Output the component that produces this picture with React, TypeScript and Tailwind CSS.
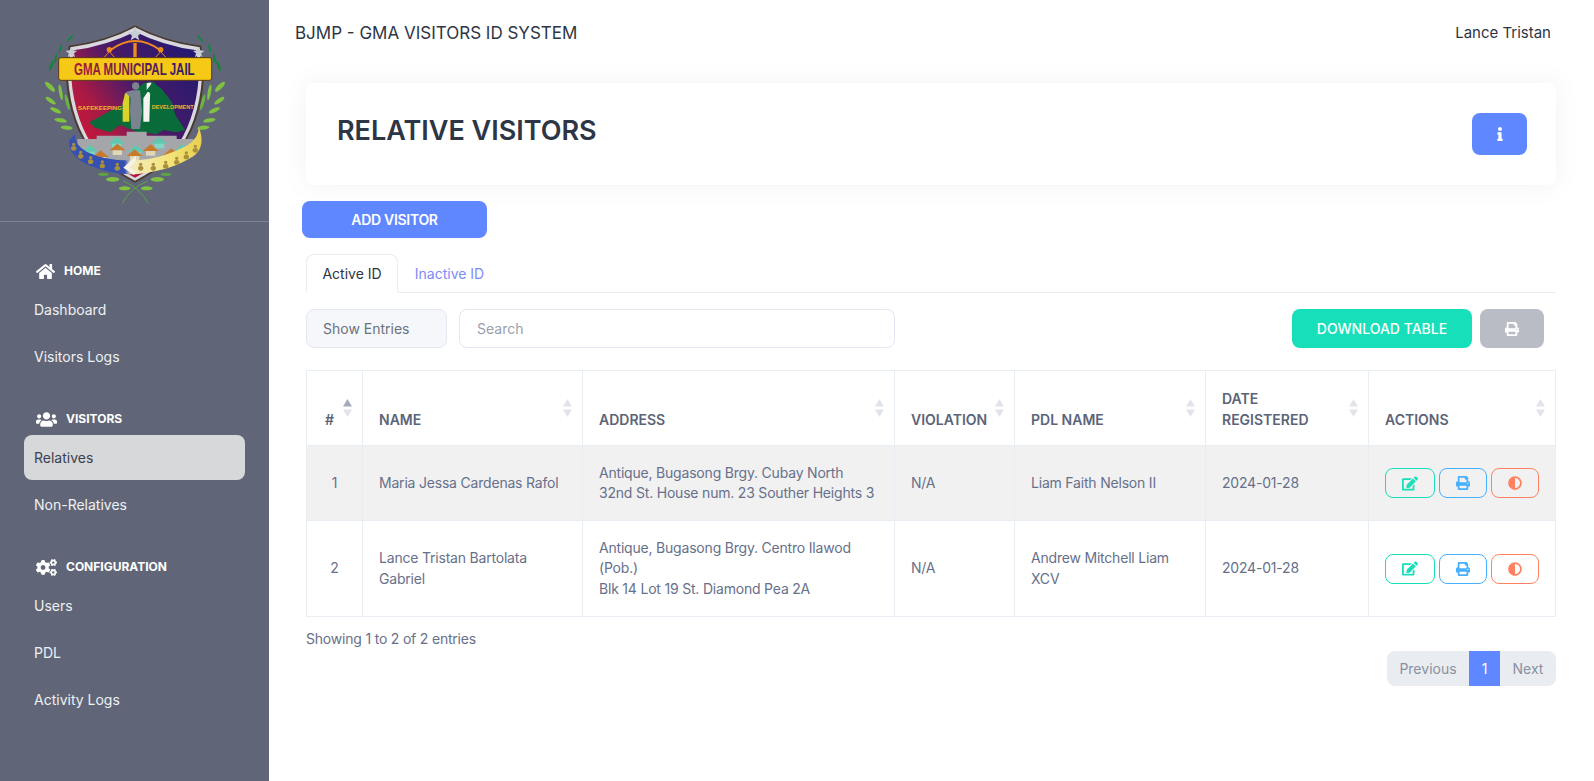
import { FaAdjust, FaCogs, FaEdit, FaHome, FaInfo, FaPrint, FaUsers } from "react-icons/fa"

const leaves = [
  [120, 70, 14, 3, -50, "#0f8a3c"],
  [91, 100, 13, 3, -75, "#0f8a3c"],
  [77, 130, 14, 3, -80, "#12843a"],
  [64, 152, 16, 4, -70, "#12843a"],
  [60, 215, 20, 7, 45, "#7fc241"],
  [62, 257, 18, 6, 35, "#7fc241"],
  [77, 286, 18, 6, 25, "#7fc241"],
  [92, 316, 19, 6, 10, "#7fc241"],
  [110, 338, 18, 6, 5, "#7fc241"],
  [92, 232, 24, 5, 80, "#7fc241"],
  [112, 262, 24, 5, 75, "#6cb33f"],
]

function Logo() {
  const mirrored = leaves.map((l) => [630 - (l[0] as number), l[1], l[2], l[3], -(l[4] as number), l[5]])
  const figures = [
    [131, 392], [152, 416], [182, 432], [217, 445], [262, 452],
    [332, 452], [370, 452], [407, 446], [440, 434], [469, 418], [496, 398],
  ]
  return (
    <svg width="210" height="195" viewBox="0 0 630 585">
      <defs>
        <linearGradient id="shield" x1="0" y1="1" x2="1" y2="0.2">
          <stop offset="0" stopColor="#e8142c" />
          <stop offset="0.35" stopColor="#a81a45" />
          <stop offset="0.6" stopColor="#4a1a68" />
          <stop offset="1" stopColor="#241a70" />
        </linearGradient>
        <linearGradient id="jail" x1="0" y1="0" x2="1" y2="0">
          <stop offset="0" stopColor="#a81a35" />
          <stop offset="1" stopColor="#2a1a70" />
        </linearGradient>
        <linearGradient id="ring" x1="0" y1="0" x2="1" y2="0">
          <stop offset="0" stopColor="#3450b0" />
          <stop offset="0.42" stopColor="#3450b0" />
          <stop offset="0.47" stopColor="#f3ecc0" />
          <stop offset="0.75" stopColor="#f4e47a" />
          <stop offset="1" stopColor="#e8cf50" />
        </linearGradient>
      </defs>
      {[...leaves, ...mirrored].map((l, i) => (
        <ellipse key={i} cx={l[0] as number} cy={l[1] as number} rx={l[2] as number} ry={l[3] as number} fill={l[5] as string} transform={`rotate(${l[4]} ${l[0]} ${l[1]})`} />
      ))}
      <path d="M277 565 Q300 520 352 498 M355 565 Q330 520 280 498" stroke="#5da544" strokeWidth="3" fill="none" />
      {[[220, 478, 16, 5, "#5da544"], [248, 493, 20, 7, "#7fc241"], [284, 520, 18, 6, "#7fc241"], [350, 520, 18, 6, "#7fc241"], [382, 493, 20, 7, "#7fc241"], [408, 478, 16, 5, "#5da544"]].map((l, i) => (
        <ellipse key={i} cx={l[0] as number} cy={l[1] as number} rx={l[2] as number} ry={l[3] as number} fill={l[4] as string} />
      ))}
      <path d="M315 31 Q400 78 514 92 L522 190 Q512 330 440 420 Q380 470 315 503 Q250 470 190 420 Q118 330 108 190 L116 92 Q230 78 315 31Z" fill="#4a3a30" />
      <path d="M315 37 Q400 82 509 97 L516 190 Q506 328 436 416 Q378 464 315 497 Q252 464 194 416 Q124 328 114 190 L121 97 Q230 82 315 37Z" fill="#d8d8de" />
      <path d="M315 50 Q400 92 500 106 L506 190 Q496 322 430 410 Q376 456 315 488 Q254 456 200 410 Q134 322 124 190 L130 106 Q230 92 315 50Z" fill="url(#shield)" />
      <polygon points="315,34 321,50 336,52 324,62 328,76 315,68 302,76 306,62 294,52 309,50" fill="#c8ccd4" />
      <polygon points="124,95 129,106 141,108 132,115 135,127 124,120 113,127 116,115 107,108 119,106" fill="#c8ccd4" />
      <polygon points="506,95 511,106 523,108 514,115 517,127 506,120 495,127 498,115 489,108 501,106" fill="#c8ccd4" />
      <path d="M240 106 Q315 50 392 106" stroke="#ee8a1e" strokeWidth="6" fill="none" />
      <rect x="310" y="84" width="10" height="44" fill="#ee8a1e" />
      <circle cx="238" cy="104" r="8" fill="#ee8a1e" />
      <circle cx="392" cy="104" r="8" fill="#ee8a1e" />
      <path d="M238 110 L218 132 H258Z M392 110 L372 132 H412Z" fill="none" stroke="#ee8a1e" strokeWidth="3" />
      <rect x="86" y="128" width="459" height="68" rx="7" fill="#f5c916" stroke="#5a3a14" strokeWidth="3" />
      <text transform="scale(1 1.3)" x="132" y="138" fontFamily="'Liberation Sans', sans-serif" fontWeight="700" fontSize="37" fill="url(#jail)" textLength="362" lengthAdjust="spacingAndGlyphs">GMA MUNICIPAL JAIL</text>
      <path d="M178 322 Q210 305 250 283 Q270 278 285 262 L300 240 L340 205 L368 200 L395 222 L425 260 L436 300 L465 345 L440 352 L400 345 L380 358 L320 350 L270 330 L240 352 L195 338Z" fill="#0a6b3a" />
      <path d="M285 235 H298 V320 H278 V265Z" fill="#d8d22a" />
      <path d="M352 232 Q362 228 360 245 L358 320 H340 V250Z" fill="#f3f4f0" />
      <path d="M350 205 Q372 198 360 212 L350 225Z" fill="#f3f4f0" />
      <circle cx="317" cy="213" r="11" fill="#7a838f" />
      <path d="M286 232 L306 226 H330 L336 290 L330 342 H304 L300 290 L302 248Z" fill="#7a838f" />
      <text x="144" y="285" fontFamily="'Liberation Sans', sans-serif" fontWeight="700" fontSize="15" fill="#e8b92a" textLength="132" lengthAdjust="spacingAndGlyphs">SAFEKEEPING</text>
      <text x="365" y="283" fontFamily="'Liberation Sans', sans-serif" fontWeight="700" fontSize="15" fill="#e8b92a" textLength="126" lengthAdjust="spacingAndGlyphs">DEVELOPMENT</text>
      <path d="M142 372 H200 V362 H290 V350 H350 V362 H440 V372 H490 L490 425 Q315 490 142 425Z" fill="#a4a6aa" />
      {[[260, 378, "#5ec9b0"], [388, 378, "#5ec9b0"], [180, 402, "#5ec9b0"], [318, 402, "#5ec9b0"], [458, 400, "#5ec9b0"], [212, 418, "#c87a2c"], [262, 398, "#c87a2c"], [314, 415, "#c87a2c"], [362, 400, "#c87a2c"], [424, 412, "#c87a2c"]].map((h, i) => (
        <g key={i}>
          <polygon points={`${(h[0] as number) - 24},${(h[1] as number) + 8} ${h[0]},${(h[1] as number) - 12} ${(h[0] as number) + 24},${(h[1] as number) + 8}`} fill={h[2] as string} />
          <rect x={(h[0] as number) - 14} y={(h[1] as number) + 8} width="28" height="14" fill={h[2] === "#5ec9b0" ? "#7fd8c4" : "#e2d6b8"} />
        </g>
      ))}
      <path d="M118 375 Q112 420 175 450 Q260 485 330 476 Q430 465 495 420 Q528 390 506 335 Q508 368 470 392 Q400 430 320 436 Q230 440 170 410 Q132 390 135 358Z" fill="url(#ring)" />
      {figures.map((f, i) => (
        <g key={i} fill="#a98f3a">
          <circle cx={f[0]} cy={f[1] - 4} r="5" />
          <ellipse cx={f[0]} cy={f[1] + 8} rx="8" ry="7" />
        </g>
      ))}
      <path d="M317 422 L280 458 L312 480 L320 470 L300 458 L318 438Z" fill="#f6f3e4" />
    </svg>
  )
}

function NavHeading({ icon, label, className }: { icon: React.ReactNode; label: string; className: string }) {
  return (
    <div className={"flex h-5 items-center pl-9 text-white " + className}>
      {icon}
      <span className="text-[12px] font-bold">{label}</span>
    </div>
  )
}

function NavItem({ label, active }: { label: string; active?: boolean }) {
  return (
    <a className={"mx-6 flex h-[45px] items-center rounded-lg pl-[10px] text-[14px] " + (active ? "bg-[#d7d8da] text-[#3c4250]" : "mt-[2px] text-[#eef0f3]")}>
      {label}
    </a>
  )
}

function Sidebar() {
  return (
    <aside className="h-[781px] w-[269px] shrink-0 bg-[#606677]">
      <div className="flex h-[222px] justify-center border-b border-[#7f8493] pt-[15px]">
        <Logo />
      </div>
      <NavHeading className="mt-[39px] mb-[6px]" icon={<FaHome className="mr-[9px] h-[19px] w-[19px]" />} label="HOME" />
      <NavItem label="Dashboard" />
      <NavItem label="Visitors Logs" />
      <NavHeading className="mt-[30px] mb-[6px]" icon={<FaUsers className="mr-[9px] h-[21px] w-[21px]" />} label="VISITORS" />
      <NavItem label="Relatives" active />
      <NavItem label="Non-Relatives" />
      <NavHeading className="mt-[30px] mb-[6px]" icon={<FaCogs className="mr-[9px] h-[21px] w-[21px]" />} label="CONFIGURATION" />
      <NavItem label="Users" />
      <NavItem label="PDL" />
      <NavItem label="Activity Logs" />
    </aside>
  )
}

function Sort({ active }: { active?: boolean }) {
  return (
    <svg className="absolute right-[10px] top-[28px]" width="9" height="19" viewBox="0 0 9 19">
      <path d="M4.5 0 L9 7.5 H0Z" fill={active ? "#a5a9ba" : "#e1e4ea"} />
      <path d="M4.5 18 L9 10.5 H0Z" fill="#e1e4ea" />
    </svg>
  )
}

const headers = [
  { label: "#", w: "w-[56px] pl-[18px]" },
  { label: "NAME", w: "w-[220px] pl-4" },
  { label: "ADDRESS", w: "w-[312px] pl-4" },
  { label: "VIOLATION", w: "w-[120px] pl-4" },
  { label: "PDL NAME", w: "w-[191px] pl-4" },
  { label: "DATE\nREGISTERED", w: "w-[163px] pl-4" },
  { label: "ACTIONS", w: "w-[187px] pl-4" },
]

const rows = [
  {
    id: 1,
    name: "Maria Jessa Cardenas Rafol",
    address: ["Antique, Bugasong Brgy. Cubay North", "32nd St. House num. 23 Souther Heights 3"],
    pdl: "Liam Faith Nelson II",
  },
  {
    id: 2,
    name: "Lance Tristan Bartolata Gabriel",
    address: ["Antique, Bugasong Brgy. Centro Ilawod (Pob.)", "Blk 14 Lot 19 St. Diamond Pea 2A"],
    pdl: "Andrew Mitchell Liam XCV",
  },
]

function Actions() {
  return (
    <div className="flex gap-1">
      <button className="flex h-[30px] w-[50px] items-center justify-center rounded-lg border border-[#16dfb9] text-[#16dfb9]">
        <FaEdit className="h-[15px] w-[16px]" />
      </button>
      <button className="flex h-[30px] w-[48px] items-center justify-center rounded-lg border border-[#47b0ff] text-[#47b0ff]">
        <FaPrint className="h-[14px] w-[14px]" />
      </button>
      <button className="flex h-[30px] w-[48px] items-center justify-center rounded-lg border border-[#ff8260] text-[#ff8260]">
        <FaAdjust className="h-[14px] w-[14px]" />
      </button>
    </div>
  )
}

export default function App() {
  return (
    <div className="flex h-[781px] overflow-hidden bg-white font-['Inter','Noto_Sans',sans-serif] text-[#67708a]">
      <Sidebar />
      <main className="min-w-0 flex-1">
        <header className="flex h-[67px] items-center justify-between pr-[43px] pl-[26px] text-[#2d3645]">
          <span className="text-[17px]">BJMP - GMA VISITORS ID SYSTEM</span>
          <span className="text-[15px]">Lance Tristan</span>
        </header>
        <div className="pr-[38px] pl-[37px]">
          <section className="mt-[16px] flex h-[102px] items-center justify-between rounded-lg bg-white pr-[29px] pl-[31px] shadow-[0_0_24px_rgba(100,110,140,0.09)]">
            <h1 className="mb-[6px] text-[27px] font-semibold text-[#2d3645]">RELATIVE VISITORS</h1>
            <button className="flex h-[42px] w-[55px] items-center justify-center rounded-lg bg-[#5f87ff] text-white">
              <FaInfo className="h-[14px] w-[14px]" />
            </button>
          </section>

          <button className="mt-[16px] -ml-1 flex h-[37px] w-[185px] items-center justify-center rounded-lg bg-[#5f87ff] text-[14px] font-semibold tracking-[-0.3px] text-white">
            ADD VISITOR
          </button>

          <nav className="mt-[16px] flex h-[39px] border-b border-[#e9eef5] text-[14px]">
            <a className="-mb-px flex h-[39px] w-[92px] items-center justify-center rounded-t-lg border border-[#e9eef5] border-b-white bg-white text-[#2d3645]">Active ID</a>
            <a className="flex w-[103px] items-center justify-center text-[#7c8cf8]">Inactive ID</a>
          </nav>

          <div className="mt-[16px] flex h-[39px] items-stretch text-[14px]">
            <div className="flex w-[141px] items-center rounded-lg border border-[#e2e7f1] bg-[#f5f7fa] pl-[16px] text-[#6b7280]">Show Entries</div>
            <div className="ml-3 flex w-[436px] items-center rounded-lg border border-[#e2e7f1] pl-[17px] text-[#9aa0ad]">Search</div>
            <button className="ml-auto flex w-[180px] items-center justify-center rounded-lg bg-[#16dfb9] text-[14px] font-medium text-white">DOWNLOAD TABLE</button>
            <button className="mr-[12px] ml-2 flex w-[64px] items-center justify-center rounded-lg bg-[#b9bcc4] text-white">
              <FaPrint className="h-[14px] w-[14px]" />
            </button>
          </div>

          <table className="mt-[22px] w-[1249px] table-fixed border-collapse text-[14px] leading-[20.5px] tracking-[-0.2px]">
            <thead>
              <tr className="h-[75px]">
                {headers.map((h, i) => (
                  <th key={h.label} className={"relative border border-[#e9eef5] pr-4 pb-[15px] text-left align-bottom text-[14px] leading-[21px] font-semibold tracking-normal whitespace-pre-line text-[#5b6478] " + h.w}>
                    {h.label}
                    <Sort active={i === 0} />
                  </th>
                ))}
              </tr>
            </thead>
            <tbody>
              {rows.map((r) => (
                <tr key={r.id} className={r.id === 1 ? "h-[75px] bg-[#f1f1f2]" : "h-[96px]"}>
                  <td className="border border-[#e9eef5] text-center">{r.id}</td>
                  <td className="border border-[#e9eef5] px-4">{r.name}</td>
                  <td className="border border-[#e9eef5] px-4">
                    {r.address.map((a) => (
                      <div key={a}>{a}</div>
                    ))}
                  </td>
                  <td className="border border-[#e9eef5] px-4">N/A</td>
                  <td className="border border-[#e9eef5] px-4">{r.pdl}</td>
                  <td className="border border-[#e9eef5] px-4">2024-01-28</td>
                  <td className="border border-[#e9eef5] px-4">
                    <Actions />
                  </td>
                </tr>
              ))}
            </tbody>
          </table>

          <div className="mt-[12px] text-[14px] leading-[20px] tracking-[-0.2px]">Showing 1 to 2 of 2 entries</div>
          <div className="mt-[2px] flex justify-end">
            <div className="flex h-[35px] overflow-hidden rounded-lg bg-[#e9edf2] text-[14px] text-[#8a90a0]">
              <span className="flex w-[82px] items-center justify-center">Previous</span>
              <span className="flex w-[31px] items-center justify-center bg-[#5f87ff] text-white">1</span>
              <span className="flex w-[56px] items-center justify-center">Next</span>
            </div>
          </div>
        </div>
      </main>
    </div>
  )
}
